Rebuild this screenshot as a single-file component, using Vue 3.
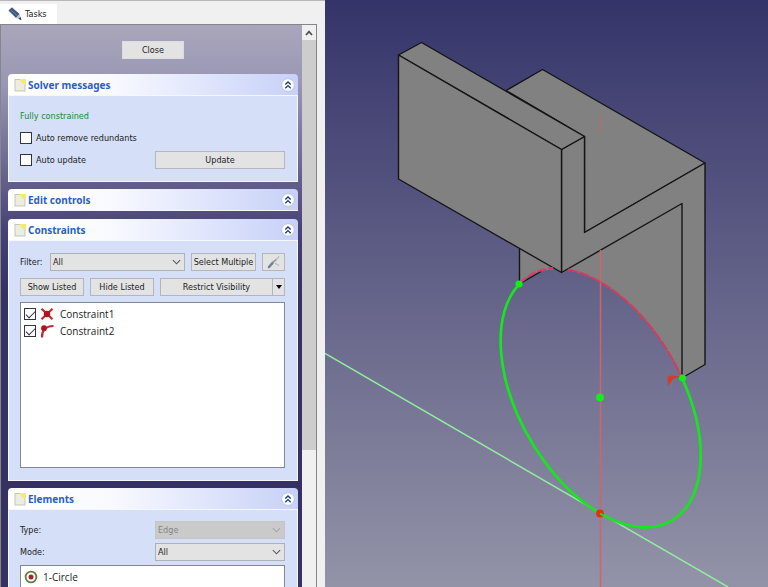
<script setup>
import { ref } from 'vue'

const autoRemove = ref(false)
const autoUpdate = ref(false)
const filter = ref('All')
const mode = ref('All')
const elementType = ref('Edge')
const constraints = ref([
  { name: 'Constraint1', kind: 'coincident', active: true },
  { name: 'Constraint2', kind: 'tangent', active: true },
])
const open = ref({ solver: true, edit: false, constraints: true, elements: true })
const groups = [
  { id: 'solver', title: 'Solver messages' },
  { id: 'edit', title: 'Edit controls' },
  { id: 'constraints', title: 'Constraints' },
  { id: 'elements', title: 'Elements' },
]
</script>

<template>
  <div class="app">
    <aside class="dock">
      <nav class="tabs">
        <button class="tab" type="button">
          <svg class="pencil" viewBox="0 0 14 14" aria-hidden="true">
            <path d="M.6 3.5 4 .6 11.6 7 8 11z" fill="#3d5680" />
            <path d="M2.2 2.4 9.8 9" stroke="#7089ad" stroke-width="1" />
            <path d="M.6 3.5 4 .6 5.2 1.700 1.900 4.800z" fill="#4b5a72" />
            <path d="M8 11 11.600 7 13.200 12.800z" fill="#b9c0cb" />
            <path d="m10.600 11.900 1.900-1.900.9 3z" fill="#222b3c" />
          </svg>
          <span>Tasks</span>
        </button>
      </nav>

      <div class="pane">
        <div class="tasks">
          <div class="close-row">
            <button class="btn close" type="button">Close</button>
          </div>

          <section v-for="g in groups" :key="g.id" class="group">
            <header class="head">
              <svg class="doc" viewBox="0 0 12 14" aria-hidden="true">
                <rect x="1" y="1.5" width="10" height="11.5" fill="#ececdf" stroke="#c6c5bd" />
                <path d="M5.5 1H11.5V7L8 5z" fill="#f2ee62" />
              </svg>
              <h2>{{ g.title }}</h2>
              <button class="fold" type="button" :aria-label="g.title" @click="open[g.id] = !open[g.id]">
                <svg viewBox="0 0 14 14" aria-hidden="true">
                  <circle cx="7" cy="7" r="6.3" fill="#fff" stroke="#b5bfdc" stroke-width=".8" />
                  <path d="M4.3 6.6 7 4 9.7 6.6M4.3 10.2 7 7.6 9.7 10.2" fill="none" stroke="#17407f" stroke-width="1.4" />
                </svg>
              </button>
            </header>

            <div v-if="g.id === 'solver' && open.solver" class="body solver">
              <p class="status">Fully constrained</p>
              <label class="check"><input v-model="autoRemove" type="checkbox" />Auto remove redundants</label>
              <div class="split">
                <label class="check"><input v-model="autoUpdate" type="checkbox" />Auto update</label>
                <button class="btn" type="button">Update</button>
              </div>
            </div>

            <div v-if="g.id === 'constraints' && open.constraints" class="body constraints">
              <div class="filter-row">
                <label for="filter">Filter:</label>
                <div class="combo">
                  <select id="filter" v-model="filter"><option>All</option></select>
                  <svg viewBox="0 0 10 6" aria-hidden="true"><path d="M1 1 5 5 9 1" /></svg>
                </div>
                <button class="btn" type="button">Select Multiple</button>
                <button class="btn tool" type="button" aria-label="Settings">
                  <svg viewBox="0 0 14 14" aria-hidden="true">
                    <path d="M7 7 12.2 1.4M8 8.2 12 10.6" stroke="#b6bbb9" stroke-width="1.2" />
                    <path d="M2 12 5.500 8" stroke="#71839a" stroke-width="2.600" stroke-linecap="round" />
                    <path d="M5.800 7.600 9 4.600" stroke="#8c979f" stroke-width="1.400" />
                  </svg>
                </button>
              </div>
              <div class="button-row">
                <button class="btn" type="button">Show Listed</button>
                <button class="btn" type="button">Hide Listed</button>
                <div class="menu-button">
                  <button class="btn main" type="button">Restrict Visibility</button>
                  <button class="btn drop" type="button" aria-label="More">
                    <svg viewBox="0 0 6 4" aria-hidden="true"><path d="M0 0H6L3 4z" fill="#000" /></svg>
                  </button>
                </div>
              </div>
              <ul class="list">
                <li v-for="c in constraints" :key="c.name">
                  <label class="check item">
                    <input v-model="c.active" type="checkbox" />
                    <svg v-if="c.kind === 'coincident'" class="glyph" viewBox="0 0 14 14" aria-hidden="true">
                      <path d="M1.500 1.800 12.500 12.200M12.500 1.800 1.500 12.200" stroke="#bf2a31" stroke-width="2.200" />
                      <circle cx="7" cy="7" r="3.200" fill="#b3131c" />
                    </svg>
                    <svg v-else class="glyph" viewBox="0 0 14 14" aria-hidden="true">
                      <path d="M2 13.500C1.800 7 5 2.200 13.500 2" fill="none" stroke="#bf2a31" stroke-width="2.200" />
                      <circle cx="4" cy="4.200" r="2.900" fill="#b3131c" />
                    </svg>
                    <span>{{ c.name }}</span>
                  </label>
                </li>
              </ul>
            </div>

            <div v-if="g.id === 'elements' && open.elements" class="body elements">
              <div class="split">
                <label for="type">Type:</label>
                <div class="combo off">
                  <select id="type" v-model="elementType" disabled><option>Edge</option></select>
                  <svg viewBox="0 0 10 6" aria-hidden="true"><path d="M1 1 5 5 9 1" /></svg>
                </div>
              </div>
              <div class="split">
                <label for="mode">Mode:</label>
                <div class="combo">
                  <select id="mode" v-model="mode"><option>All</option></select>
                  <svg viewBox="0 0 10 6" aria-hidden="true"><path d="M1 1 5 5 9 1" /></svg>
                </div>
              </div>
              <ul class="list">
                <li class="item element">
                  <svg class="glyph" viewBox="0 0 14 14" aria-hidden="true">
                    <circle cx="7" cy="7" r="5.400" fill="#fff" stroke="#637f3c" stroke-width="1.800" />
                    <circle cx="7" cy="7" r="2.500" fill="#a8202a" />
                  </svg>
                  <span>1-Circle</span>
                </li>
              </ul>
            </div>
          </section>
        </div>

        <div class="scroll">
          <button class="scroll-up" type="button" aria-label="Scroll up">
            <svg viewBox="0 0 8 6" aria-hidden="true"><path d="M1 5 4 1.6 7 5" fill="none" stroke="#505050" stroke-width="1.7" /></svg>
          </button>
          <div class="thumb"></div>
        </div>
      </div>
    </aside>

    <main class="view">
      <svg viewBox="325 0 443 587" preserveAspectRatio="xMinYMin slice" role="img" aria-label="3D view">
        <g fill="#808180" stroke="#151517" stroke-width="1.4" stroke-linejoin="round">
          <path d="M519.5 240V284A141.4 81.7 60 0 1 682 378V200H560z" stroke="none" />
          <path d="M506 90.5 542.5 69.5 705 163 584.5 232.5V136.5z" />
          <path d="M682 378 705 364.5V163L584.5 232.5V136.5L561.5 149.5V272.5L682 203.5z" />
          <path d="M398.5 55 421.5 42.5 584.5 136.5 561.5 149.5z" />
          <path d="M398.5 55 561.5 149.5V272.5L398.5 179z" />
          <path d="M519.5 249V284L541 271.5" fill="none" />
        </g>
        <path d="M600.5 114V131" class="axis" opacity=".6" />
        <path d="M600.5 250V587" class="axis" />
        <path d="M325 353.5 728 587" stroke="#92ec9f" stroke-width="1.5" />
        <g fill="none">
          <path d="M519.5 284A141.4 81.7 60 0 1 553 268" stroke="#dc3b62" stroke-width="2" stroke-dasharray="9 2" />
          <path d="M568 269.5A141.4 81.7 60 0 1 682 378" stroke="#d43b5e" stroke-width="2" stroke-dasharray="11 1" />
          <path d="M519.5 284A141.4 81.7 60 1 0 682 378" stroke="#16e61e" stroke-width="2.7" />
        </g>
        <g fill="#11ee18">
          <circle cx="519" cy="284" r="3.6" />
          <circle cx="682.5" cy="378" r="3.6" />
          <circle cx="600" cy="397.5" r="3.9" />
        </g>
        <circle cx="600" cy="513.5" r="3.9" fill="#e3300d" />
        <path d="M600 513.5 604 516" stroke="#16e61e" stroke-width="1.5" />
        <path d="M667.5 377 671 375.5 680 376.500 673 379 668 386z" fill="#d93a22" />
      </svg>
    </main>
  </div>
</template>

<style>
body {
  margin: 0;
}
</style>

<style scoped>
* {
  box-sizing: border-box;
}
.app {
  display: grid;
  grid-template-columns: 325px 1fr;
  height: 100vh;
  overflow: hidden;
  font: 9px/16px "DejaVu Sans Condensed", "DejaVu Sans", sans-serif;
  color: #1c1c24;
  background: #f0f0f0;
}
button,
select,
input {
  font: inherit;
  color: inherit;
  margin: 0;
}
.dock {
  display: flex;
  flex-direction: column;
  min-height: 0;
  padding-right: 8px;
  border-top: 1px solid #b9b5b8;
}
.tabs {
  display: flex;
  flex: none;
  height: 23px;
  padding-top: 3px;
}
.tab {
  display: flex;
  align-items: center;
  gap: 3px;
  padding: 0 10px 0 8px;
  border: 0;
  background: #fff;
}
.pencil {
  flex: none;
  width: 14px;
  height: 14px;
}
.pane {
  display: flex;
  flex: 1;
  min-height: 0;
  border: solid #85858c;
  border-width: 1px 1px 0;
}
.tasks {
  flex: 1;
  min-width: 0;
  overflow: hidden;
  padding: 0 4px 0 7px;
  background: linear-gradient(#aaa6bb 0, #9896b4 60px, #67628c 150px, #454075 210px, #353163 270px, #353163 100%);
}
.close-row {
  display: flex;
  justify-content: center;
  padding: 16px 0 15px;
}
.btn {
  display: flex;
  align-items: center;
  justify-content: center;
  height: 18px;
  padding: 0;
  border: 1px solid #b4b7ba;
  background: #e2e3e2;
  white-space: nowrap;
}
.close {
  width: 62px;
  border-color: #dcdddf;
}
.group {
  min-height: 23px;
  margin-bottom: 7px;
  border-radius: 4px 4px 0 0;
  overflow: hidden;
}
.head {
  display: flex;
  align-items: center;
  gap: 2px;
  height: 22px;
  padding: 0 3px 0 6px;
  border-bottom: 1px solid #f4f7ff;
  background: linear-gradient(90deg, #fff 0, #f9faff 35%, #c7d1f8 100%);
}
.head h2 {
  flex: 1;
  margin: 0;
  font-family: "Noto Sans", sans-serif;
  font-size: 10px;
  font-weight: 700;
  color: #2a60c4;
}
.doc {
  width: 12px;
  height: 14px;
}
.fold {
  display: flex;
  padding: 0;
  border: 0;
  background: none;
}
.fold svg {
  width: 14px;
  height: 14px;
}
.body {
  display: flex;
  flex-direction: column;
  padding: 11px 12px 12px 11px;
  border: solid #f4f7ff;
  border-width: 0 1px 1px;
  background: #d5dff7;
}
.solver {
  gap: 4px;
}
.status {
  height: 18px;
  margin: 0;
  line-height: 18px;
  color: #168a3c;
}
.check {
  display: flex;
  align-items: center;
  gap: 4px;
  height: 18px;
}
.check input {
  appearance: none;
  display: grid;
  width: 12px;
  height: 12px;
  border: 1px solid #33363c;
  background: #fff;
}
.check input:checked::after {
  content: "";
  width: 8px;
  height: 4px;
  margin: 2px 1px;
  border: solid #333;
  border-width: 0 0 1px 1px;
  transform: rotate(-45deg);
}
.split {
  display: grid;
  grid-template-columns: 1fr 130px;
  align-items: center;
}
.filter-row {
  display: grid;
  grid-template-columns: 24px 1fr 65px 23px;
  align-items: center;
  column-gap: 6px;
  height: 19px;
  margin-bottom: 7px;
}
.combo {
  display: grid;
  align-items: center;
  height: 18px;
  border: 1px solid #aeb2b6;
  background: #e2e3e2;
}
.combo > * {
  grid-area: 1 / 1;
}
.combo select {
  appearance: none;
  width: 100%;
  height: 16px;
  padding: 0 2px;
  border: 0;
  border-radius: 0;
  background: none;
}
.combo svg {
  justify-self: end;
  width: 9px;
  height: 6px;
  margin-right: 3px;
  fill: none;
  stroke: #55585c;
  stroke-width: 1.2;
  pointer-events: none;
}
.off {
  border-color: #c3c5c8;
  background: #cacaca;
  color: #858585;
}
.off select {
  opacity: 1;
}
.off svg {
  stroke: #a5a5a5;
}
.tool svg {
  width: 14px;
  height: 14px;
}
.button-row {
  display: grid;
  grid-template-columns: 64px 64px 1fr;
  column-gap: 6px;
  margin-bottom: 6px;
}
.menu-button {
  display: flex;
}
.main {
  flex: 1;
}
.drop {
  width: 12px;
  border-left: 0;
}
.drop svg {
  width: 6px;
  height: 4px;
}
.list {
  height: 166px;
  margin: 0;
  padding: 2px 3px;
  border: 1px solid #83878f;
  background: #fff;
  list-style: none;
  font-family: "Open Sans", sans-serif;
  font-size: 10px;
}
.item {
  height: 17px;
}
.item span {
  margin-left: 2px;
}
.glyph {
  width: 14px;
  height: 14px;
}
.elements {
  gap: 4px;
}
.element {
  display: flex;
  align-items: center;
  gap: 3px;
}
.scroll {
  display: flex;
  flex-direction: column;
  width: 14px;
  background: #f0f0f0;
}
.scroll-up {
  display: flex;
  align-items: center;
  justify-content: center;
  height: 15px;
  padding: 0;
  border: 0;
  background: #f0f0f0;
}
.scroll-up svg {
  width: 8px;
  height: 6px;
}
.thumb {
  height: 73%;
  background: #cdcdcd;
}
.view {
  min-width: 0;
  min-height: 0;
  background: linear-gradient(#35346a, #9393a8);
}
.view svg {
  display: block;
  width: 100%;
  height: 100%;
}
.axis {
  fill: none;
  stroke: #cf6469;
  stroke-width: 1.5;
}
</style>
